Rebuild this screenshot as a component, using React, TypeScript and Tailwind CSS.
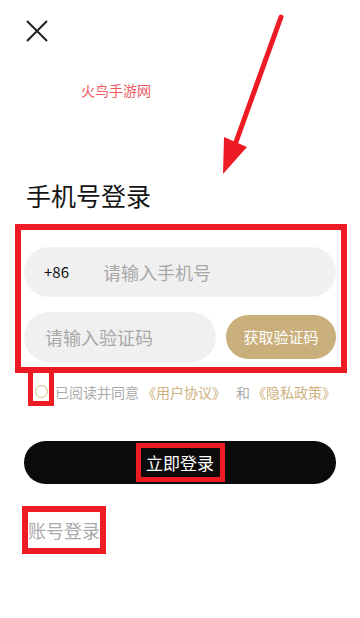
import React from 'react'

const RED = 'border-[#ed1c24]'

export default function App() {
  return (
    <div
      className="relative w-[360px] h-[618px] overflow-hidden bg-white text-[#111]"
      style={{ fontFamily: '"Noto Sans CJK SC", "Noto Sans", sans-serif' }}
    >
      {/* Close */}
      <div className="pt-[20px] pl-[26px]">
        <svg width="22" height="22" viewBox="0 0 22 22" fill="none" stroke="#1f1f1f" strokeWidth="2">
          <path d="M1 1 L21 21 M21 1 L1 21" />
        </svg>
      </div>

      {/* Watermark */}
      <p className="mt-[40px] ml-[81px] text-[14px] leading-[16px] text-[#ef5964]">火鸟手游网</p>

      {/* Title */}
      <h1 className="mt-[82px] ml-[26px] text-[25px] leading-[30px] text-[#141414]">手机号登录</h1>

      {/* Inputs, outlined */}
      <div className={`mt-[14px] ml-[15px] w-[332px] border-[6px] ${RED} pt-[17px] pl-[3px] pr-[5px] pb-[5px] flex flex-col gap-[15px]`}>
        <div className="h-[50px] rounded-full bg-[#f0f0f0] flex items-center pl-[20px]">
          <span className="w-[59px] shrink-0 text-[15px] text-[#111]">+86</span>
          <span className="text-[18px] text-[#a8a8a8]">请输入手机号</span>
        </div>
        <div className="flex items-center gap-[10px]">
          <div className="h-[50px] w-[192px] rounded-full bg-[#f0f0f0] flex items-center pl-[21px]">
            <span className="text-[18px] text-[#a8a8a8]">请输入验证码</span>
          </div>
          <button className="h-[44px] w-[110px] rounded-full bg-[#c9af7b] text-white text-[15px]">获取验证码</button>
        </div>
      </div>

      {/* Agreement */}
      <div className="ml-[28px] flex items-start">
        <div className={`w-[26px] h-[33px] border-x-[5px] border-b-[5px] ${RED} pt-[12px] pl-[2px]`}>
          <div className="w-[13px] h-[13px] rounded-full border border-[#d3b985]" />
        </div>
        <p className="ml-[1px] pt-[9px] text-[14px] leading-[20px] text-[#ababab] whitespace-nowrap">
          已阅读并同意<span className="ml-[3px] text-[#cdb17e]">《用户协议》</span>
          <span className="ml-[10px] mr-[2px]">和</span>
          <span className="text-[#cdb17e]">《隐私政策》</span>
        </p>
      </div>

      {/* Login */}
      <button className="mt-[35px] ml-[24px] w-[312px] h-[43px] rounded-full bg-[#0b0b0b] flex items-center justify-center">
        <span className={`w-[89px] h-[39px] border-[5px] ${RED} flex items-center justify-center text-white text-[17px] leading-none`}>
          立即登录
        </span>
      </button>

      {/* Account login */}
      <div className={`mt-[22px] ml-[22px] w-[84px] h-[48px] border-[6px] ${RED} flex items-center justify-center`}>
        <span className="text-[18px] leading-none text-[#a9a9a9] whitespace-nowrap">账号登录</span>
      </div>

      {/* Annotation arrow */}
      <svg className="absolute left-0 top-0 pointer-events-none" width="360" height="200" viewBox="0 0 360 200">
        <line x1="281" y1="17" x2="236" y2="142" stroke="#ed1c24" strokeWidth="5" strokeLinecap="round" />
        <polygon points="224,137 247,147 223,174" fill="#ed1c24" />
      </svg>
    </div>
  )
}
